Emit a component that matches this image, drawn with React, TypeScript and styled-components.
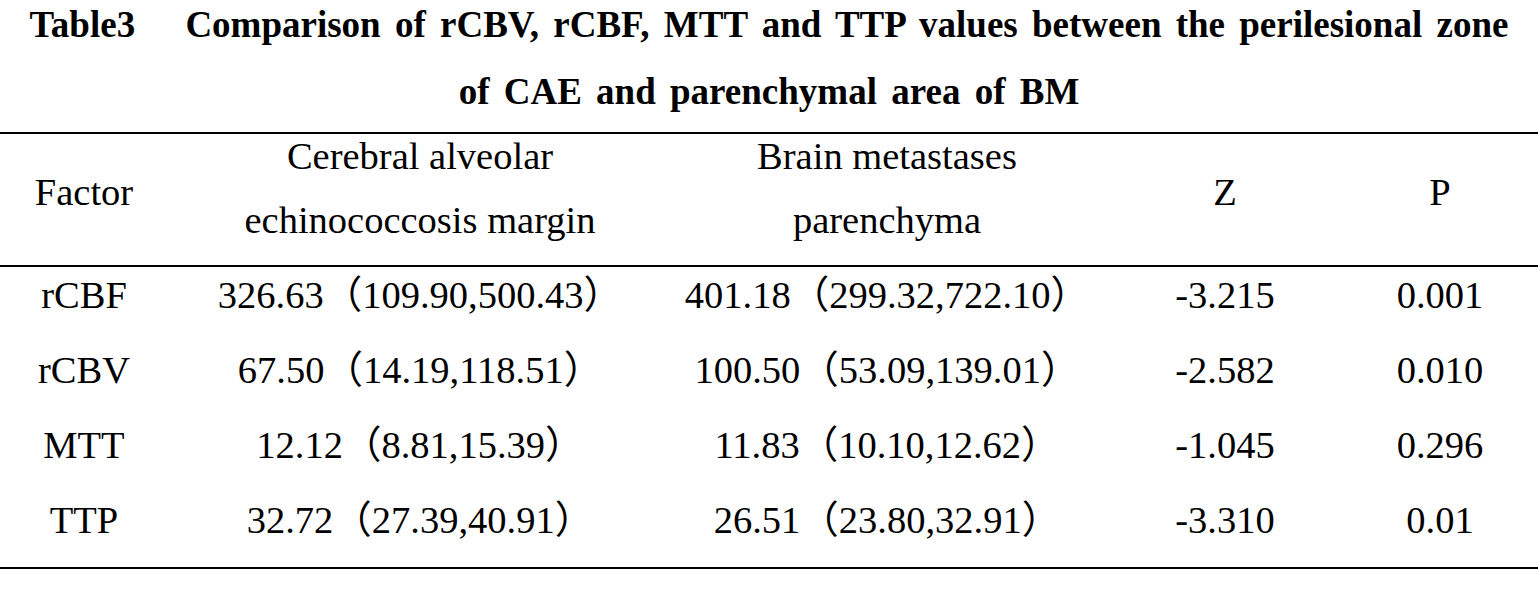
import styled, {createGlobalStyle} from 'styled-components';

const GlobalStyle = createGlobalStyle`
    html, body {
        margin: 0;
        padding: 0;
        background: #fff;
    }
    body {
        width: 1538px;
        height: 604px;
        overflow: hidden;
        color: #000;
        font-family: "Liberation Serif", "Noto Sans CJK SC", serif;
    }
`;

const Page = styled.div`
    width: 1538px;
`;

const Caption = styled.div`
    margin-top: -9px;
    text-align: center;
    font-weight: bold;
    font-size: 37px;
    line-height: 67px;
    word-spacing: 5px;
    white-space: nowrap;
`;

const Label = styled.span`
    margin-right: 36px;
`;

const Table = styled.div`
    margin-top: 7px;
    border-top: 2px solid #000;
    border-bottom: 2px solid #000;
    font-size: 38.5px;
`;

const Row = styled.div<{ $head?: boolean }>`
    display: grid;
    grid-template-columns: 168px 504px 430px 246px 184px;
    height: ${p => p.$head ? '133px' : '75px'};
    box-sizing: border-box;
    padding: ${p => p.$head ? '0 0 24px' : '6px 0 0'};
    align-items: ${p => p.$head ? 'center' : 'start'};
    border-bottom: ${p => p.$head ? '2px solid #000' : 'none'};
`;

const Cell = styled.div<{ $nudge?: boolean }>`
    display: flex;
    flex-direction: column;
    align-items: center;
    gap: 20px;
    line-height: 44px;
    white-space: nowrap;
    padding-top: ${p => p.$nudge ? '8px' : '0'};
`;

const headers: string[][] = [
    ['Factor'],
    ['Cerebral alveolar', 'echinococcosis margin'],
    ['Brain metastases', 'parenchyma'],
    ['Z'],
    ['P'],
];

const rows = [
    ['rCBF', '326.63（109.90,500.43）', '401.18（299.32,722.10）', '-3.215', '0.001'],
    ['rCBV', '67.50（14.19,118.51）', '100.50（53.09,139.01）', '-2.582', '0.010'],
    ['MTT', '12.12（8.81,15.39）', '11.83（10.10,12.62）', '-1.045', '0.296'],
    ['TTP', '32.72（27.39,40.91）', '26.51（23.80,32.91）', '-3.310', '0.01'],
];

export default function App() {
    return (
        <Page>
            <GlobalStyle/>
            <Caption>
                <div><Label>Table3</Label> Comparison of rCBV, rCBF, MTT and TTP values between the perilesional zone</div>
                <div>of CAE and parenchymal area of BM</div>
            </Caption>
            <Table>
                <Row $head>
                    {headers.map((lines, i) => (
                        <Cell key={i} $nudge={lines.length === 1}>
                            {lines.map(line => <span key={line}>{line}</span>)}
                        </Cell>
                    ))}
                </Row>
                {rows.map(row => (
                    <Row key={row[0]}>
                        {row.map((value, i) => <Cell key={i}>{value}</Cell>)}
                    </Row>
                ))}
            </Table>
        </Page>
    );
}
